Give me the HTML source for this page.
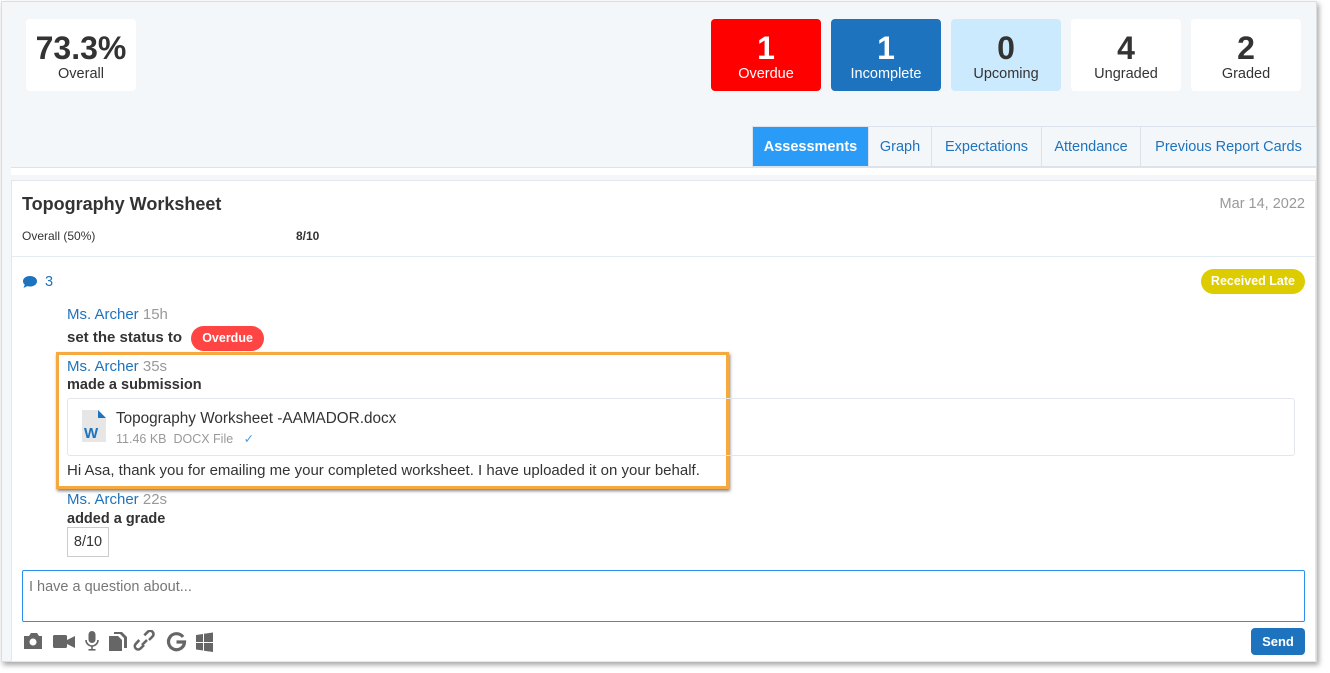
<!DOCTYPE html>
<html><head><style>
*{box-sizing:border-box;margin:0;padding:0}
body{width:1330px;height:673px;background:#fff;font-family:"Liberation Sans",sans-serif;position:relative;overflow:hidden;color:#333}
.frame{position:absolute;left:1px;top:1px;width:1316px;height:661px;background:#f4f7fa;border:1px solid #ddd;box-shadow:2px 3px 5px rgba(0,0,0,.35)}
.abs{position:absolute}
.stat{position:absolute;top:19px;width:110px;height:72px;border-radius:4px;text-align:center;background:#fff}
.stat b{display:block;font-size:32px;margin-top:14px;line-height:30px}
.stat span{display:block;font-size:14.5px;margin-top:3px}
.tabs{position:absolute;left:752px;top:126px;height:41px;display:flex;border:1px solid #dde3ea;background:#f4f7fa}
.tabs div{text-align:center;line-height:40px;font-size:14.5px;color:#1e73be;border-right:1px solid #dde3ea}
.card{position:absolute;left:11px;top:180px;width:1305px;height:482px;background:#fff;border:1px solid #e3e7eb}
.blue{color:#1e73be}
.gray{color:#999}
.nm{font-size:15px;font-weight:500}
</style></head><body>
<div class="frame"></div>
<div class="stat" style="left:26px;width:110px"><b>73.3%</b><span>Overall</span></div>
<div class="stat" style="left:711px;background:#ff0000;color:#fff"><b>1</b><span>Overdue</span></div>
<div class="stat" style="left:831px;background:#1e73be;color:#fff"><b>1</b><span>Incomplete</span></div>
<div class="stat" style="left:951px;background:#cbeafd"><b>0</b><span>Upcoming</span></div>
<div class="stat" style="left:1071px"><b>4</b><span>Ungraded</span></div>
<div class="stat" style="left:1191px"><b>2</b><span>Graded</span></div>
<div class="abs" style="left:11px;top:167px;width:1305px;height:8px;background:#fff;border-top:1px solid #dde3ea"></div>
<div class="tabs"><div style="width:116px;background:#2a9cf7;color:#fff;font-weight:bold">Assessments</div><div style="width:63px">Graph</div><div style="width:110px">Expectations</div><div style="width:99px">Attendance</div><div style="width:175px;border-right:0">Previous Report Cards</div></div>
<div class="card">
 <div class="abs" style="left:10px;top:13px;font-size:18px;font-weight:bold;color:#333">Topography Worksheet</div>
 <div class="abs gray" style="right:10px;top:15px;font-size:14.5px">Mar 14, 2022</div>
 <div class="abs" style="left:10px;top:48px;font-size:12px">Overall (50%)</div>
 <div class="abs" style="left:284px;top:48px;font-size:12px;font-weight:bold">8/10</div>
 <div class="abs" style="left:0;top:75px;width:100%;border-top:1px solid #e3ebf3"></div>
 <svg class="abs" style="left:10px;top:94px" width="16" height="14" viewBox="0 0 16 14"><path d="M8 1C4 1 1 3.3 1 6.2c0 1.4.7 2.6 1.8 3.5L1.5 13l3.8-1.9c.8.3 1.7.4 2.7.4 4 0 7-2.3 7-5.3S12 1 8 1z" fill="#1e73be"/></svg>
 <div class="abs blue" style="left:33px;top:93px;font-size:14.5px">3</div>
 <div class="abs" style="right:10px;top:88px;background:#ddcc00;color:#fff;font-weight:bold;font-size:12.5px;border-radius:13px;padding:0 10px;line-height:25px">Received Late</div>
 <div class="abs nm" style="left:55px;top:125px"><span class="blue">Ms. Archer</span> <span class="gray">15h</span></div>
 <div class="abs" style="left:55px;top:144px;font-size:15px;font-weight:bold;line-height:25px">set the status to <span style="display:inline-block;background:#ff4444;color:#fff;font-size:12.5px;border-radius:13px;padding:0 11px;line-height:25px;margin-left:5px">Overdue</span></div>
 <div class="abs" style="left:44px;top:171px;width:673px;height:137px;border:3px solid #f5a93f;box-shadow:1px 2px 3px rgba(0,0,0,.5)"></div>
 <div class="abs nm" style="left:55px;top:177px"><span class="blue">Ms. Archer</span> <span class="gray">35s</span></div>
 <div class="abs" style="left:55px;top:196px;font-size:14.5px;font-weight:bold">made a submission</div>
 <div class="abs" style="left:55px;top:217px;width:1228px;height:58px;border:1px solid #e3e7eb;border-radius:3px"></div>
 <svg class="abs" style="left:70px;top:229px" width="24" height="32" viewBox="0 0 24 32"><path d="M0 0h16l8 8v24H0z" fill="#e6e6e6"/><path d="M16 0l8 8h-8z" fill="#1e73be"/><text x="2" y="28" font-family="Liberation Sans" font-weight="bold" font-size="15" fill="#1e73be">W</text></svg>
 <div class="abs" style="left:104px;top:229px;font-size:15.3px">Topography Worksheet -AAMADOR.docx</div>
 <div class="abs gray" style="left:104px;top:250px;font-size:12.5px">11.46 KB &nbsp;DOCX File &nbsp;&nbsp;<span style="color:#4a9fe0">&#x2713;</span></div>
 <div class="abs" style="left:55px;top:281px;font-size:15px">Hi Asa, thank you for emailing me your completed worksheet. I have uploaded it on your behalf.</div>
 <div class="abs nm" style="left:55px;top:310px"><span class="blue">Ms. Archer</span> <span class="gray">22s</span></div>
 <div class="abs" style="left:55px;top:330px;font-size:14.5px;font-weight:bold">added a grade</div>
 <div class="abs" style="left:55px;top:346px;width:42px;height:30px;border:1px solid #ccc;font-size:14.5px;text-align:center;line-height:28px">8/10</div>
 <div class="abs" style="left:10px;top:389px;width:1283px;height:52px;border:1px solid #2a8ff0;border-radius:2px;font-size:14.5px;color:#777;padding:8px 6px">I have a question about...</div>
 <svg class="abs" style="left:10px;top:449px" width="200" height="22" viewBox="0 0 200 22" fill="#666">
  <path d="M2 6h5l2-3h6l2 3h3v13H2z"/><circle cx="11" cy="12" r="3.5" fill="#fff"/>
  <rect x="31" y="5" width="14" height="13" rx="1.5"/><path d="M45 10l8-4v12l-8-4z"/>
  <rect x="66.5" y="1" width="7" height="12" rx="3.5"/><path d="M64 10a6 6 0 0 0 12 0" stroke="#666" stroke-width="1.6" fill="none"/><rect x="69.2" y="16" width="1.6" height="4"/><rect x="66.5" y="19" width="7" height="1.6"/>
  <path d="M87 6h9l4 4v11H87z"/><path d="M92 2h8l5 5v11h-3V8l-4-4h-6z"/>
  <path d="M122 12l-3.5 3.5a3.3 3.3 0 0 1-4.7-4.7L117.3 7M127 7l3.5-3.5a3.3 3.3 0 0 0-4.7-4.7L122.3 2.3M120 12l5-5" stroke="#666" stroke-width="2.6" fill="none" transform="translate(0,3)"/>
  <path d="M161 6.5a8 8 0 1 0 1.5 5h-8" stroke="#666" stroke-width="3.2" fill="none" transform="translate(0,0.5)"/>
  <path d="M174 5l7-1v8h-7zM182 3.8l9-1.3V12h-9zM174 13h7v7.5l-7-1zM182 13h9v9l-9-1.3z"/>
 </svg>
 <div class="abs" style="left:1239px;top:447px;width:54px;height:27px;background:#1e73be;color:#fff;font-weight:bold;font-size:13px;border-radius:4px;text-align:center;line-height:27px">Send</div>
</div>
</body></html>
